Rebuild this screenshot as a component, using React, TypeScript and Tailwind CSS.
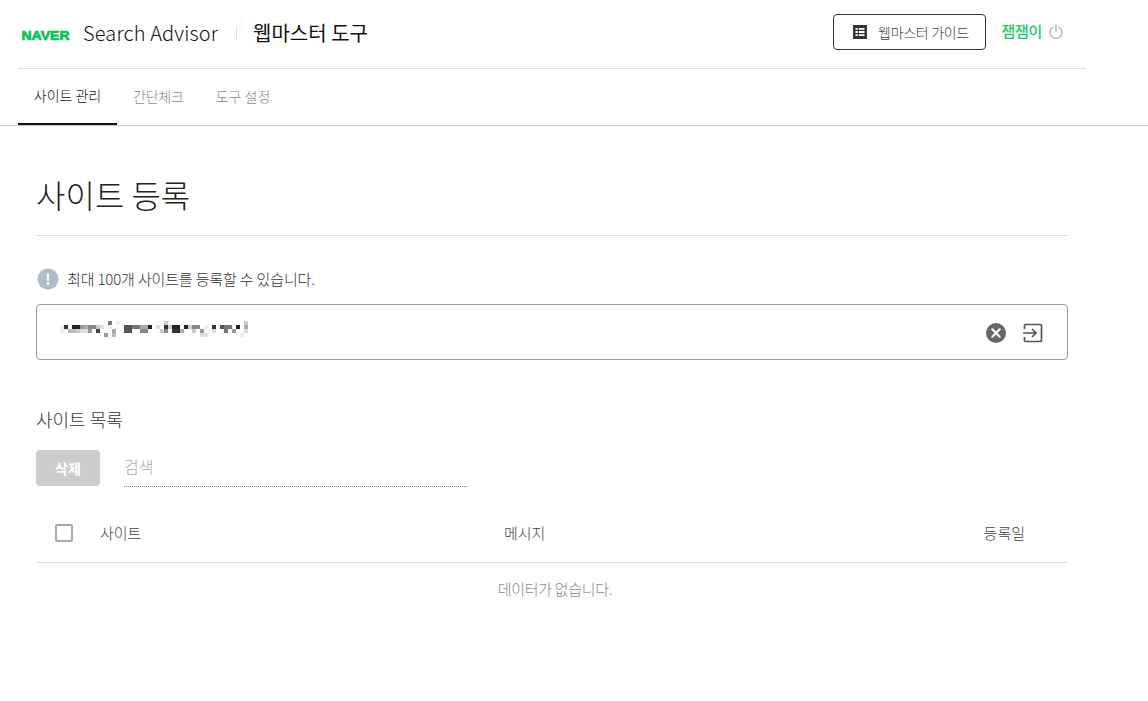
import React from 'react';

// blurred url: [row, col, span, colour] on a 4px grid
const mosaic: [number, number, number, string][][] = [
  [[13, 1, '#777'], [15, 1, '#eee'], [27, 1, '#ccc'], [47, 1, '#ccc']],
  [[1, 1, '#eee'], [2, 1, '#333'], [4, 2, '#222'], [6, 1, '#999'], [7, 1, '#aaa'], [8, 2, '#888'], [10, 1, '#ccc'], [11, 1, '#ddd'], [13, 1, '#eee'], [17, 2, '#555'], [19, 2, '#777'], [21, 2, '#aaa'], [23, 1, '#222'], [25, 1, '#ddd'], [27, 1, '#333'], [28, 1, '#ccc'], [29, 2, '#222'], [32, 1, '#222'], [33, 1, '#ccc'], [34, 2, '#888'], [37, 1, '#eee'], [39, 1, '#333'], [41, 1, '#555'], [42, 2, '#777'], [45, 1, '#222'], [47, 1, '#aaa']],
  [[1, 1, '#eee'], [3, 2, '#bbb'], [5, 1, '#ccc'], [6, 2, '#ddd'], [8, 1, '#999'], [10, 1, '#444'], [14, 1, '#aaa'], [17, 2, '#555'], [21, 2, '#888'], [26, 1, '#ccc'], [27, 1, '#888'], [29, 2, '#333'], [31, 1, '#aaa'], [34, 1, '#ccc'], [36, 1, '#999'], [39, 1, '#ddd'], [42, 1, '#777'], [44, 1, '#999'], [47, 1, '#ddd']],
  [[12, 1, '#999'], [14, 1, '#bbb'], [36, 2, '#ddd'], [46, 1, '#eee']],
];

const App: React.FC = () => {
  return (
    <div className="w-[1148px] h-[701px] overflow-hidden bg-white text-[#333] font-['Noto_Sans_CJK_KR','Noto_Sans',sans-serif]">
      <header className="ml-[18px] w-[1068px] h-[69px] pb-[2px] border-b border-[#ddd] flex items-center">
        <svg width="50" height="12" viewBox="0 0 50 12" className="ml-[3px] mt-[4px]">
          <text x="0.5" y="10.5" fontSize="13" fontWeight="700" fill="#03c75a" stroke="#03c75a" strokeWidth="0.7" fontFamily="'Liberation Sans', sans-serif" textLength="48" lengthAdjust="spacingAndGlyphs">NAVER</text>
        </svg>
        <span className="ml-[12px] text-[20px] font-light text-[#111] tracking-[0.15px]">Search Advisor</span>
        <span className="ml-[18px] w-px h-[12px] bg-[#ddd]"></span>
        <span className="ml-[16px] text-[20px] font-normal text-[#111]">웹마스터 도구</span>
        <button className="ml-auto mb-[2px] w-[153px] h-[36px] pl-[2px] border border-[#333] rounded-[4px] flex items-center justify-center gap-[11px] text-[14px] font-light text-[#444] tracking-[-0.3px]">
          <svg width="14" height="14" viewBox="0 0 14 14">
            <path fillRule="evenodd" fill="#333" d="M0 0h14v14H0zM2.5 3v1.8h2.2V3zM5.8 3v1.8h5.7V3zM2.5 6.1v1.8h2.2V6.1zM5.8 6.1v1.8h5.7V6.1zM2.5 9.2V11h2.2V9.2zM5.8 9.2V11h5.7V9.2z" />
          </svg>
          웹마스터 가이드
        </button>
        <span className="ml-[15px] mb-[4px] text-[15px] font-medium text-[#1ec76b] tracking-[-0.3px]">잼잼이</span>
        <svg width="16" height="16" viewBox="0 0 16 16" fill="none" stroke="#bbb" strokeWidth="1.6" strokeLinecap="round" className="ml-[6px] mr-[22px] mb-[2px]">
          <path d="M5 3.2a6 6 0 1 0 6 0" />
          <path d="M8 1.5v6" />
        </svg>
      </header>

      <nav className="h-[57px] border-b border-[#ccc] pl-[18px] flex items-stretch text-[14px] font-light">
        <div className="w-[99px] h-[56px] pb-[2px] border-b-2 border-[#111] flex items-center justify-center text-[#111]">사이트 관리</div>
        <div className="ml-[16px] pb-[2px] flex items-center text-[#888] tracking-[-0.2px]">간단체크</div>
        <div className="ml-[32px] pb-[2px] flex items-center text-[#888]">도구 설정</div>
      </nav>

      <main className="ml-[36px] w-[1032px]">
        <h1 className="h-[110px] border-b border-[#ddd] pt-[44px] text-[32px] leading-[48px] font-light text-[#222]">사이트 등록</h1>

        <div className="mt-[32px] h-[22px] flex items-center text-[15px] font-light text-[#333] tracking-[-0.15px]">
          <svg width="22" height="22" viewBox="0 0 22 22" className="ml-px">
            <circle cx="11" cy="11" r="10.5" fill="#acbec9" />
            <rect x="9.8" y="5.5" width="2.4" height="7.5" rx="1" fill="#fff" />
            <circle cx="11" cy="15.5" r="1.4" fill="#fff" />
          </svg>
          <span className="ml-[8px]">최대 100개 사이트를 등록할 수 있습니다.</span>
        </div>

        <div className="mt-[14px] h-[56px] border border-[#999] rounded-[4px] flex items-center">
          <svg width="196" height="16" viewBox="0 0 196 16" className="ml-[19px] mr-auto mb-[6px]">
            {mosaic.map((row, r) =>
              row.map(([col, span, c]) => (
                <rect key={`${r}-${col}`} x={col * 4} y={r * 4} width={span * 4} height="4" fill={c} />
              )),
            )}
          </svg>
          <svg width="20" height="20" viewBox="0 0 20 20" className="mr-[17px] mt-[2px]">
            <circle cx="10" cy="10" r="10" fill="#666" />
            <path d="M6.3 6.3l7.4 7.4M13.7 6.3l-7.4 7.4" stroke="#fff" strokeWidth="2.2" strokeLinecap="round" />
          </svg>
          <svg width="20" height="20" viewBox="0 0 20 20" fill="none" stroke="#555" strokeWidth="1.7" className="mr-[24px] mt-[2px]">
            <path d="M1.5 6V2.5a1 1 0 0 1 1-1h15a1 1 0 0 1 1 1v15a1 1 0 0 1-1 1h-15a1 1 0 0 1-1-1V14" />
            <path d="M0 10h12.5M9 6l4 4-4 4" />
          </svg>
        </div>

        <h2 className="mt-[47px] text-[18px] leading-[24px] font-light text-[#333]">사이트 목록</h2>

        <div className="mt-[19px] flex items-start">
          <button className="w-[64px] h-[36px] rounded-[4px] bg-[#ccc] text-white text-[14px] font-bold">삭제</button>
          <div className="ml-[24px] w-[343px] h-[37px] border-b border-dotted border-[#777] text-[16px] leading-[33px] font-light text-[#aaa]">검색</div>
        </div>

        <div className="mt-[17px] h-[59px] border-b border-[#ddd] flex items-center text-[15px] font-light text-[#444]">
          <span className="ml-[19px] w-[18px] h-[18px] border-2 border-[#aaa] rounded-[2px]"></span>
          <span className="ml-[27px] w-[404px]">사이트</span>
          <span>메시지</span>
          <span className="ml-auto mr-[43px]">등록일</span>
        </div>

        <p className="mt-[15px] pl-[6px] text-center text-[15px] leading-[22px] font-light text-[#888] tracking-[-0.3px]">데이터가 없습니다.</p>
      </main>
    </div>
  );
};

export default App;
